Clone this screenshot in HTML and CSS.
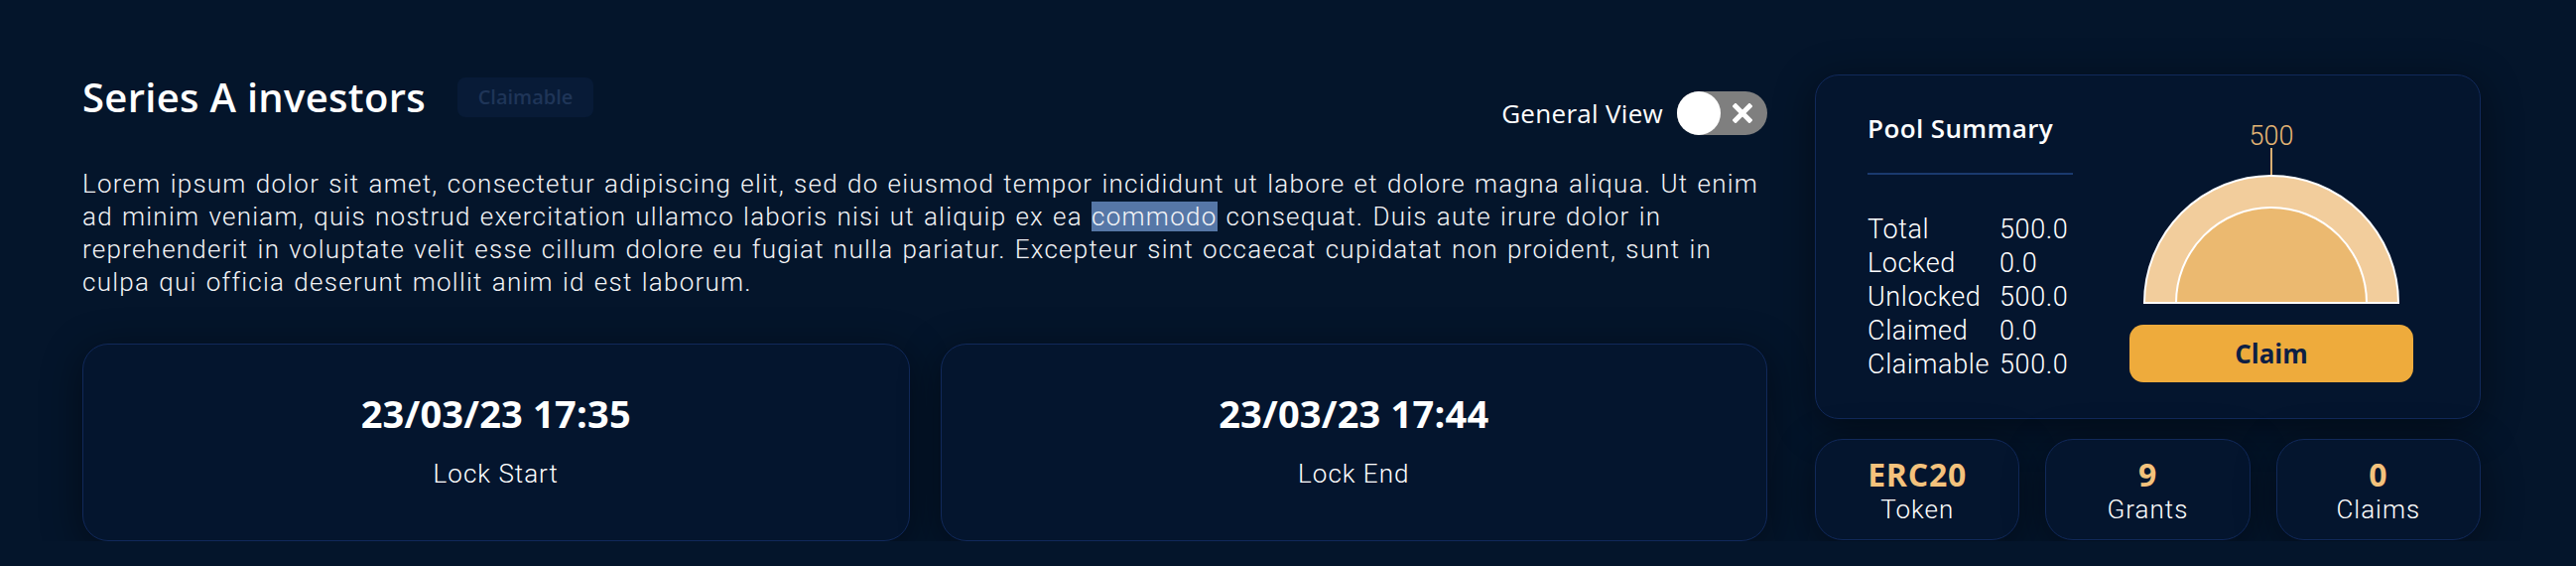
FILE: index.html
```html
<!DOCTYPE html>
<html lang="en">
<head>
    <meta charset="UTF-8">
    <meta name="viewport" content="width=device-width, initial-scale=1.0">
    <title>Series A investors</title>
    <link rel="stylesheet" href="styles.css">
</head>
<body>
    <div id="page">
        <!-- left : pool info -->
        <div class="main">
            <div class="head">
                <div class="titleWrap">
                    <h1>Series A investors</h1>
                    <span class="badge">Claimable</span>
                </div>
                <div class="viewSwitch">
                    <span>General View</span>
                    <button class="toggle">
                        <span class="knob"></span>
                        <svg class="ico" viewBox="0 0 20 20" width="20" height="20">
                            <path d="M3 3 L17 17 M17 3 L3 17" stroke="#fff" stroke-width="5" stroke-linecap="square"/>
                        </svg>
                    </button>
                </div>
            </div>
            <p class="desc">Lorem ipsum dolor sit amet, consectetur adipiscing elit, sed do eiusmod tempor incididunt ut labore et dolore magna aliqua. Ut enim<br>ad minim veniam, quis nostrud exercitation ullamco laboris nisi ut aliquip ex ea <span class="sel">commodo</span> consequat. Duis aute irure dolor in<br>reprehenderit in voluptate velit esse cillum dolore eu fugiat nulla pariatur. Excepteur sint occaecat cupidatat non proident, sunt in<br>culpa qui officia deserunt mollit anim id est laborum.</p>
            <div class="dates">
                <div class="box dateBox">
                    <strong>23/03/23 17:35</strong>
                    <span>Lock Start</span>
                </div>
                <div class="box dateBox">
                    <strong>23/03/23 17:44</strong>
                    <span>Lock End</span>
                </div>
            </div>
        </div>

        <!-- right : summary -->
        <div class="side">
            <div class="box summary">
                <div class="sumText">
                    <h2>Pool Summary</h2>
                    <ul>
                        <li><span>Total</span><span>500.0</span></li>
                        <li><span>Locked</span><span>0.0</span></li>
                        <li><span>Unlocked</span><span>500.0</span></li>
                        <li><span>Claimed</span><span>0.0</span></li>
                        <li><span>Claimable</span><span>500.0</span></li>
                    </ul>
                </div>
                <div class="sumChart">
                    <svg viewBox="0 0 286 195" width="286" height="195">
                        <text x="143" y="30" text-anchor="middle" class="chartLabel">500</text>
                        <line x1="143" y1="33" x2="143" y2="62" stroke="#d9ae72" stroke-width="2"/>
                        <path d="M15 189 A128 128 0 0 1 271 189 Z" fill="#f2cd9c" stroke="#fff" stroke-width="2"/>
                        <path d="M47 189 A96 96 0 0 1 239 189 Z" fill="#ebb970" stroke="#fff" stroke-width="2"/>
                    </svg>
                    <button class="claimBtn">Claim</button>
                </div>
            </div>
            <div class="stats">
                <div class="box stat"><strong>ERC20</strong><span>Token</span></div>
                <div class="box stat"><strong>9</strong><span>Grants</span></div>
                <div class="box stat"><strong>0</strong><span>Claims</span></div>
            </div>
        </div>
    </div>
</body>
</html>
```
FILE: styles.css
```css
* {
    margin: 0;
    padding: 0;
    box-sizing: border-box;
}
li {
    list-style: none;
}
body {
    background: #04152b;
    color: #fff;
    font-family: "Open Sans", "Liberation Sans", sans-serif;
    font-weight: 400;
}
#page {
    display: flex;
    gap: 48px;
    padding: 75px 0 0 83px;
}
.main {
    width: 1698px;
    padding-top: 3px;
}
.side {
    width: 671px;
}
.head {
    display: flex;
    justify-content: space-between;
    align-items: flex-start;
}
.titleWrap {
    display: flex;
    align-items: center;
    gap: 32px;
}
h1 {
    font-size: 40px;
    line-height: 40px;
    font-weight: 600;
    letter-spacing: 0.3px;
}
.badge {
    display: block;
    width: 137px;
    height: 40px;
    line-height: 40px;
    text-align: center;
    background: #081b37;
    color: #1f3558;
    font-size: 20px;
    font-weight: 600;
    border-radius: 8px;
}
.viewSwitch {
    display: flex;
    align-items: center;
    gap: 14px;
    margin-top: 14px;
    font-size: 26px;
    letter-spacing: 0.3px;
}
.toggle {
    position: relative;
    width: 91px;
    height: 44px;
    border: 0;
    border-radius: 22px;
    background: #7f7f7f;
    cursor: pointer;
}
.toggle .knob {
    position: absolute;
    left: 0;
    top: 0;
    width: 44px;
    height: 44px;
    border-radius: 50%;
    background: #fff;
}
.toggle .ico {
    position: absolute;
    left: 56px;
    top: 12px;
}
.desc {
    margin-top: 33px;
    font-family: Roboto, "Open Sans", sans-serif;
    font-weight: 300;
    font-size: 26px;
    line-height: 33px;
    letter-spacing: 1.25px;
    word-spacing: 1.5px;
    white-space: nowrap;
    color: #f2f3f6;
}
.sel {
    background: #5677a7;
}
.box {
    background: #04152e;
    border: 1.5px solid #11295a;
    box-shadow: 0 8px 40px rgba(0, 0, 0, 0.45);
}
.dates {
    display: grid;
    grid-template-columns: 1fr 1fr;
    gap: 31px;
    margin-top: 45px;
}
.dateBox {
    height: 199px;
    border-radius: 26px;
    display: flex;
    flex-direction: column;
    align-items: center;
    justify-content: center;
    padding-bottom: 4px;
}
.dateBox strong {
    font-size: 38px;
    line-height: 40px;
    font-weight: 700;
    letter-spacing: 0.2px;
}
.dateBox span {
    margin-top: 26px;
    font-family: Roboto, "Open Sans", sans-serif;
    font-weight: 300;
    font-size: 26px;
    line-height: 30px;
    letter-spacing: 1px;
}
.summary {
    height: 347px;
    border-radius: 24px;
    display: flex;
    justify-content: space-between;
    padding: 38px 67px 0 52px;
}
.sumText {
    width: 207px;
}
h2 {
    font-size: 26px;
    line-height: 30px;
    font-weight: 600;
    letter-spacing: 0.4px;
}
.sumText ul {
    border-top: 2px solid #1a3a6e;
    margin-top: 30px;
    padding-top: 38px;
}
.sumText li {
    display: grid;
    grid-template-columns: 133px auto;
    font-family: Roboto, "Open Sans", sans-serif;
    font-weight: 300;
    font-size: 27px;
    line-height: 34px;
    letter-spacing: 0.6px;
    white-space: nowrap;
}
.sumChart {
    width: 286px;
    padding-top: 2px;
}
.sumChart svg {
    display: block;
}
.chartLabel {
    font-family: Roboto, "Open Sans", sans-serif;
    font-size: 27px;
    font-weight: 300;
    fill: #e4b675;
}
.claimBtn {
    display: block;
    width: 286px;
    height: 58px;
    margin-top: 16px;
    border: 0;
    border-radius: 14px;
    background: #eeab3c;
    color: #0d1f44;
    font-family: "Open Sans", "Liberation Sans", sans-serif;
    font-size: 26px;
    font-weight: 700;
    cursor: pointer;
}
.stats {
    display: grid;
    grid-template-columns: repeat(3, 1fr);
    gap: 26px;
    margin-top: 20px;
}
.stat {
    height: 102px;
    border-radius: 28px;
    display: flex;
    flex-direction: column;
    align-items: center;
    justify-content: center;
    padding-top: 2px;
}
.stat strong {
    font-size: 32px;
    line-height: 36px;
    font-weight: 700;
    letter-spacing: 0.8px;
    color: #f4c27c;
}
.stat span {
    margin-top: 1px;
    font-family: Roboto, "Open Sans", sans-serif;
    font-weight: 300;
    font-size: 26px;
    line-height: 32px;
    letter-spacing: 1px;
}
```
